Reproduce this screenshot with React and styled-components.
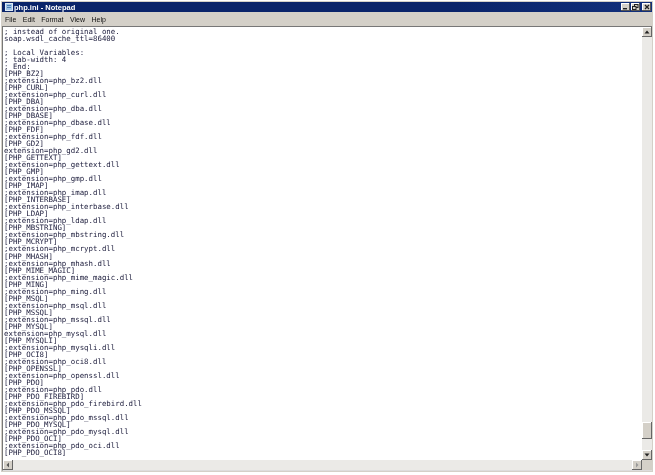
import React from "react";
import styled, { createGlobalStyle } from "styled-components";

const GlobalStyle = createGlobalStyle`
  html, body {
    margin: 0;
    padding: 0;
    background: #fff;
  }
`;

const Window = styled.div`
  width: 652px;
  height: 471px;
  margin: 1px 0 0 1px;
  box-sizing: border-box;
  display: flex;
  flex-direction: column;
  background: #d4d0c8;
  padding: 1px;
  overflow: hidden;
  font-family: "Liberation Sans", Arial, sans-serif;
  filter: blur(0.3px);
`;

const TitleBar = styled.div`
  flex: none;
  height: 10px;
  display: flex;
  align-items: center;
  padding: 0 1px 0 3px;
  background: linear-gradient(90deg, #0a246a 0%, #0a246a 70%, #12307c 100%);
  color: #fff;
  font-size: 7.5px;
  font-weight: 700;
`;

const TitleIcon = styled.svg`
  width: 8px;
  height: 8px;
  margin-right: 1px;
`;

const TitleText = styled.span`
  flex: 1;
`;

const CaptionButton = styled.div`
  width: 9px;
  height: 8px;
  margin-left: ${p => p.$gap}px;
  background: #d4d0c8;
  box-shadow: inset -1px -1px 0 #555, inset 1px 1px 0 #fff;
  display: flex;
  align-items: center;
  justify-content: center;
`;

const MenuBar = styled.div`
  flex: none;
  height: 14px;
  display: flex;
  align-items: center;
  gap: 6.5px;
  padding: 0 3px;
  font-size: 7px;
  color: #111;
`;

const Body = styled.div`
  flex: 1;
  min-height: 0;
  display: grid;
  grid-template-columns: minmax(0, 1fr) 10px;
  grid-template-rows: minmax(0, 1fr) 10px;
  border-top: 1px solid #777;
  border-left: 1px solid #777;
  border-bottom: 1px solid #ddd;
`;

const TextArea = styled.pre`
  margin: 0;
  padding: 1px 0 0 1px;
  background: #fff;
  overflow: hidden;
  font-family: "DejaVu Sans Mono", "Liberation Mono", monospace;
  font-size: 7.4px;
  line-height: 7.02px;
  color: #1a1a3a;
`;

const ScrollBarV = styled.div`
  background: #ebeae7;
  display: flex;
  flex-direction: column;
`;

const ScrollBarH = styled.div`
  background: #ebeae7;
  display: flex;
  justify-content: space-between;
`;

const Corner = styled.div`
  background: #d4d0c8;
`;

const ScrollButton = styled.div`
  flex: none;
  width: 10px;
  height: 10px;
  box-sizing: border-box;
  background: #d4d0c8;
  box-shadow: inset -1px -1px 0 #666, inset 1px 1px 0 #fff;
  display: flex;
  align-items: center;
  justify-content: center;
`;

const Track = styled.div`
  flex: 1;
  display: flex;
  flex-direction: column;
  justify-content: flex-end;
  padding-bottom: 11px;
`;

const Thumb = styled.div`
  height: 17px;
  background: #d4d0c8;
  box-shadow: inset -1px -1px 0 #666, inset 1px 1px 0 #fff;
`;

const lines = [
  "; instead of original one.",
  "soap.wsdl_cache_ttl=86400",
  "",
  "; Local Variables:",
  "; tab-width: 4",
  "; End:",
  "[PHP_BZ2]",
  ";extension=php_bz2.dll",
  "[PHP_CURL]",
  ";extension=php_curl.dll",
  "[PHP_DBA]",
  ";extension=php_dba.dll",
  "[PHP_DBASE]",
  ";extension=php_dbase.dll",
  "[PHP_FDF]",
  ";extension=php_fdf.dll",
  "[PHP_GD2]",
  "extension=php_gd2.dll",
  "[PHP_GETTEXT]",
  ";extension=php_gettext.dll",
  "[PHP_GMP]",
  ";extension=php_gmp.dll",
  "[PHP_IMAP]",
  ";extension=php_imap.dll",
  "[PHP_INTERBASE]",
  ";extension=php_interbase.dll",
  "[PHP_LDAP]",
  ";extension=php_ldap.dll",
  "[PHP_MBSTRING]",
  ";extension=php_mbstring.dll",
  "[PHP_MCRYPT]",
  ";extension=php_mcrypt.dll",
  "[PHP_MHASH]",
  ";extension=php_mhash.dll",
  "[PHP_MIME_MAGIC]",
  ";extension=php_mime_magic.dll",
  "[PHP_MING]",
  ";extension=php_ming.dll",
  "[PHP_MSQL]",
  ";extension=php_msql.dll",
  "[PHP_MSSQL]",
  ";extension=php_mssql.dll",
  "[PHP_MYSQL]",
  "extension=php_mysql.dll",
  "[PHP_MYSQLI]",
  ";extension=php_mysqli.dll",
  "[PHP_OCI8]",
  ";extension=php_oci8.dll",
  "[PHP_OPENSSL]",
  ";extension=php_openssl.dll",
  "[PHP_PDO]",
  ";extension=php_pdo.dll",
  "[PHP_PDO_FIREBIRD]",
  ";extension=php_pdo_firebird.dll",
  "[PHP_PDO_MSSQL]",
  ";extension=php_pdo_mssql.dll",
  "[PHP_PDO_MYSQL]",
  ";extension=php_pdo_mysql.dll",
  "[PHP_PDO_OCI]",
  ";extension=php_pdo_oci.dll",
  "[PHP_PDO_OCI8]",
];

const Arrow = ({ points, color = "#222" }) => (
  <svg width="6" height="6" viewBox="0 0 6 6">
    <polygon points={points} fill={color} />
  </svg>
);

export default function App() {
  return (
    <>
      <GlobalStyle />
      <Window>
        <TitleBar>
          <TitleIcon viewBox="0 0 8 8">
            <rect x="0.5" y="0.5" width="7" height="7" fill="#9fc4e8" stroke="#dfeaf5" />
            <rect x="2" y="2" width="4" height="1" fill="#4f7fb5" />
            <rect x="2" y="4" width="4" height="1" fill="#4f7fb5" />
          </TitleIcon>
          <TitleText>php.ini - Notepad</TitleText>
          <CaptionButton $gap={0}>
            <svg width="7" height="6" viewBox="0 0 7 6">
              <rect x="1" y="4" width="4" height="1.4" fill="#222" />
            </svg>
          </CaptionButton>
          <CaptionButton $gap={1}>
            <svg width="7" height="6" viewBox="0 0 7 6" fill="none" stroke="#222">
              <rect x="2.5" y="0.5" width="3.5" height="3" />
              <rect x="0.5" y="2.5" width="3.5" height="3" fill="#d4d0c8" />
            </svg>
          </CaptionButton>
          <CaptionButton $gap={2}>
            <svg width="6" height="6" viewBox="0 0 6 6" stroke="#222" strokeWidth="1.3">
              <path d="M1 1 L5 5 M5 1 L1 5" />
            </svg>
          </CaptionButton>
        </TitleBar>
        <MenuBar>
          <span>File</span>
          <span>Edit</span>
          <span>Format</span>
          <span>View</span>
          <span>Help</span>
        </MenuBar>
        <Body>
          <TextArea>{lines.join("\n")}</TextArea>
          <ScrollBarV>
            <ScrollButton>
              <Arrow points="3,1.5 5.5,4.5 0.5,4.5" />
            </ScrollButton>
            <Track>
              <Thumb />
            </Track>
            <ScrollButton>
              <Arrow points="0.5,1.5 5.5,1.5 3,4.5" />
            </ScrollButton>
          </ScrollBarV>
          <ScrollBarH>
            <ScrollButton>
              <Arrow points="4,0.5 4,5.5 1.5,3" color="#555" />
            </ScrollButton>
            <ScrollButton>
              <Arrow points="2,0.5 2,5.5 4.5,3" color="#999" />
            </ScrollButton>
          </ScrollBarH>
          <Corner />
        </Body>
      </Window>
    </>
  );
}
